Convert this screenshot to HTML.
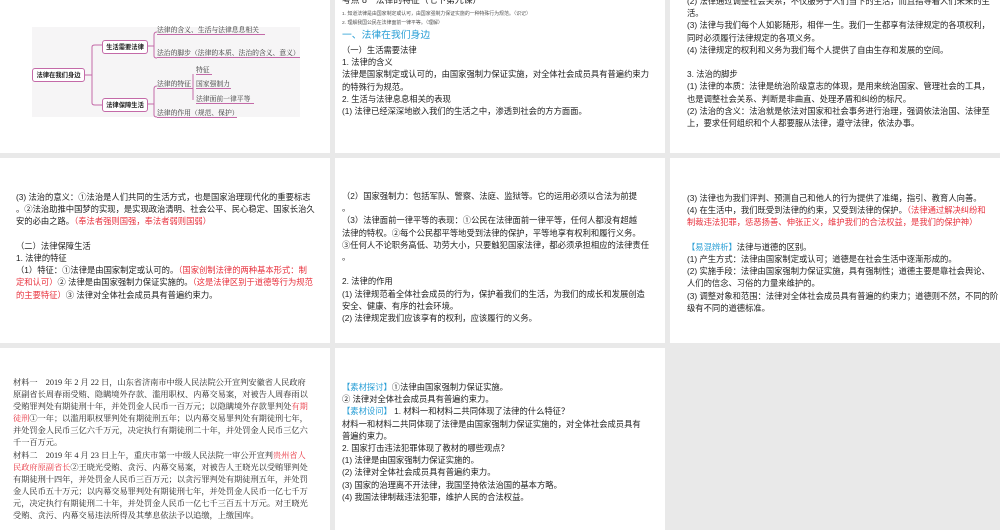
<!DOCTYPE html>
<html><head><meta charset="utf-8"><style>
body{margin:0;width:1000px;height:530px;background:#e9e9e9;position:relative;overflow:hidden;font-family:"Liberation Sans","Noto Sans CJK SC",sans-serif;color:#222}
.p{position:absolute;background:#fff;overflow:hidden}
.t{position:absolute;font-size:8.3px;line-height:12.2px;white-space:nowrap}
.r{color:#e8313d}.b{color:#2a9fd6}
.s{font-family:"Liberation Serif","Noto Serif CJK SC",serif;font-size:8.2px;line-height:12.1px}
.mm{position:absolute;font-family:"Noto Serif CJK SC",serif;font-size:6.8px;color:#333;white-space:nowrap;line-height:10px}
.bx{position:absolute;border:1px solid #c46aa8;border-radius:3px;font-size:6.3px;font-weight:bold;background:#fff;text-align:center;line-height:12px;white-space:nowrap;font-family:"Noto Sans CJK SC",sans-serif}
.u{border-bottom:1px solid #c46aa8}
</style></head><body>

<div class="p" style="left:0;top:0;width:330px;height:153px">
 <div style="position:absolute;left:32px;top:27px;width:268px;height:90px;background:#f6f5f6"></div>
 <svg style="position:absolute;left:0;top:0" width="330" height="153" fill="none" stroke="#c46aa8" stroke-width="1">
  <path d="M84 75H92M92 47V103M92 47Q92 45 95 45H102M92 103Q92 105 95 105H102"/>
  <path d="M146 46H154M154 35V56M154 35Q154 32 157 32M154 56Q154 58 157 58"/>
  <path d="M146 104H154M154 89V115M154 89Q154 86 157 86M154 115Q154 117 157 117"/>
  <path d="M193 74V100"/>
 </svg>
 <div class="bx" style="left:32px;top:68px;width:51px;height:12px">法律在我们身边</div>
 <div class="bx" style="left:102px;top:40px;width:44px;height:12px">生活需要法律</div>
 <div class="bx" style="left:102px;top:98px;width:44px;height:12px">法律保障生活</div>
 <div class="mm u" style="left:157px;top:24px;width:108px">法律的含义、生活与法律息息相关</div>
 <div class="mm u" style="left:157px;top:47px;width:143px">法治的脚步（法律的本质、法治的含义、意义）</div>
 <div class="mm u" style="left:157px;top:78px;width:36px">法律的特征</div>
 <div class="mm u" style="left:196px;top:64px;width:16px">特征</div>
 <div class="mm u" style="left:196px;top:78px;width:35px">国家强制力</div>
 <div class="mm u" style="left:196px;top:93px;width:58px">法律面前一律平等</div>
 <div class="mm u" style="left:157px;top:107px;width:80px">法律的作用（规范、保护）</div>
</div>

<div class="p" style="left:335px;top:0;width:330px;height:153px">
 <div class="t" style="left:7px;top:-6px;font-size:8.8px">考点 8　法律的特征（七下第九课）</div>
 <div class="t" style="left:7px;top:10px;font-size:4.9px;line-height:9px;color:#555">1. 知道法律是由国家制定或认可，由国家强制力保证实施的一种特殊行为规范。（识记）<br>2. 理解我国公民在法律面前一律平等。（理解）</div>
 <div class="t b" style="left:7px;top:29px;font-size:9.8px;line-height:14px">一、法律在我们身边</div>
 <div class="t" style="left:7px;top:44px">（一）生活需要法律<br>1. 法律的含义<br>法律是国家制定或认可的，由国家强制力保证实施，对全体社会成员具有普遍约束力<br>的特殊行为规范。<br>2. 生活与法律息息相关的表现<br>(1) 法律已经深深地嵌入我们的生活之中，渗透到社会的方方面面。</div>
</div>

<div class="p" style="left:670px;top:0;width:330px;height:153px">
 <div class="t" style="left:17px;top:-5px">(2) 法律通过调整社会关系，不仅服务于人们当下的生活，而且指导着人们未来的生<br>活。<br>(3) 法律与我们每个人如影随形，相伴一生。我们一生都享有法律规定的各项权利，<br>同时必须履行法律规定的各项义务。<br>(4) 法律规定的权利和义务为我们每个人提供了自由生存和发展的空间。<br><br>3. 法治的脚步<br>(1) 法律的本质：法律是统治阶级意志的体现，是用来统治国家、管理社会的工具，<br>也是调整社会关系、判断是非曲直、处理矛盾和纠纷的标尺。<br>(2) 法治的含义：法治就是依法对国家和社会事务进行治理，强调依法治国、法律至<br>上，要求任何组织和个人都要服从法律，遵守法律，依法办事。</div>
</div>

<div class="p" style="left:0;top:158px;width:330px;height:185px">
 <div class="t" style="left:16px;top:33px">(3) 法治的意义：①法治是人们共同的生活方式，也是国家治理现代化的重要标志<br>。②法治助推中国梦的实现，是实现政治清明、社会公平、民心稳定、国家长治久<br>安的必由之路。<span class="r">（奉法者强则国强，奉法者弱则国弱）</span><br><br>（二）法律保障生活<br>1. 法律的特征<br>（1）特征：①法律是由国家制定或认可的。<span class="r">（国家创制法律的两种基本形式：制</span><br><span class="r">定和认可）</span>② 法律是由国家强制力保证实施的。<span class="r">（这是法律区别于道德等行为规范</span><br><span class="r">的主要特征）</span>③ 法律对全体社会成员具有普遍约束力。</div>
</div>

<div class="p" style="left:335px;top:158px;width:330px;height:185px">
 <div class="t" style="left:7px;top:32px">（2）国家强制力：包括军队、警察、法庭、监狱等。它的运用必须以合法为前提<br>。<br>（3）法律面前一律平等的表现：①公民在法律面前一律平等，任何人都没有超越<br>法律的特权。②每个公民都平等地受到法律的保护，平等地享有权利和履行义务。<br>③任何人不论职务高低、功劳大小，只要触犯国家法律，都必须承担相应的法律责任<br>。<br><br>2. 法律的作用<br>(1) 法律规范着全体社会成员的行为，保护着我们的生活，为我们的成长和发展创造<br>安全、健康、有序的社会环境。<br>(2) 法律规定我们应该享有的权利，应该履行的义务。</div>
</div>

<div class="p" style="left:670px;top:158px;width:330px;height:185px">
 <div class="t" style="left:17px;top:34px">(3) 法律也为我们评判、预测自己和他人的行为提供了准绳，指引、教育人向善。<br>(4) 在生活中，我们既受到法律的约束，又受到法律的保护。<span class="r">（法律通过解决纠纷和</span><br><span class="r">制裁违法犯罪，惩恶扬善、伸张正义，维护我们的合法权益，是我们的保护神）</span><br><br><span class="b">【易混辨析】</span>法律与道德的区别。<br>(1) 产生方式：法律由国家制定或认可；道德是在社会生活中逐渐形成的。<br>(2) 实施手段：法律由国家强制力保证实施，具有强制性；道德主要是靠社会舆论、<br>人们的信念、习俗的力量来维护的。<br>(3) 调整对象和范围：法律对全体社会成员具有普遍的约束力；道德则不然，不同的阶<br>级有不同的道德标准。</div>
</div>

<div class="p" style="left:0;top:348px;width:330px;height:182px">
 <div class="t s" style="left:13px;top:29px">材料一　2019 年 2 月 22 日，山东省济南市中级人民法院公开宣判安徽省人民政府<br>原副省长周春雨受贿、隐瞒境外存款、滥用职权、内幕交易案，对被告人周春雨以<br>受贿罪判处有期徒刑十年，并处罚金人民币一百万元；以隐瞒境外存款罪判处<span class="r">有期</span><br><span class="r">徒刑</span>①一年；以滥用职权罪判处有期徒刑五年；以内幕交易罪判处有期徒刑七年，<br>并处罚金人民币三亿六千万元，决定执行有期徒刑二十年，并处罚金人民币三亿六<br>千一百万元。<br>材料二　2019 年 4 月 23 日上午，重庆市第一中级人民法院一审公开宣判<span class="r">贵州省人</span><br><span class="r">民政府原副省长</span>②王晓光受贿、贪污、内幕交易案，对被告人王晓光以受贿罪判处<br>有期徒刑十四年，并处罚金人民币三百万元；以贪污罪判处有期徒刑五年，并处罚<br>金人民币五十万元；以内幕交易罪判处有期徒刑七年，并处罚金人民币一亿七千万<br>元，决定执行有期徒刑二十年，并处罚金人民币一亿七千三百五十万元。对王晓光<br>受贿、贪污、内幕交易违法所得及其孳息依法予以追缴，上缴国库。</div>
</div>

<div class="p" style="left:335px;top:348px;width:330px;height:182px">
 <div class="t" style="left:7px;top:33px"><span class="b">【素材探讨】</span>①法律由国家强制力保证实施。<br>② 法律对全体社会成员具有普遍约束力。<br><span class="b">【素材设问】</span> 1. 材料一和材料二共同体现了法律的什么特征？<br>材料一和材料二共同体现了法律是由国家强制力保证实施的，对全体社会成员具有<br>普遍约束力。<br>2. 国家打击违法犯罪体现了教材的哪些观点？<br>(1) 法律是由国家强制力保证实施的。<br>(2) 法律对全体社会成员具有普遍约束力。<br>(3) 国家的治理离不开法律，我国坚持依法治国的基本方略。<br>(4) 我国法律制裁违法犯罪，维护人民的合法权益。</div>
</div>

</body></html>
